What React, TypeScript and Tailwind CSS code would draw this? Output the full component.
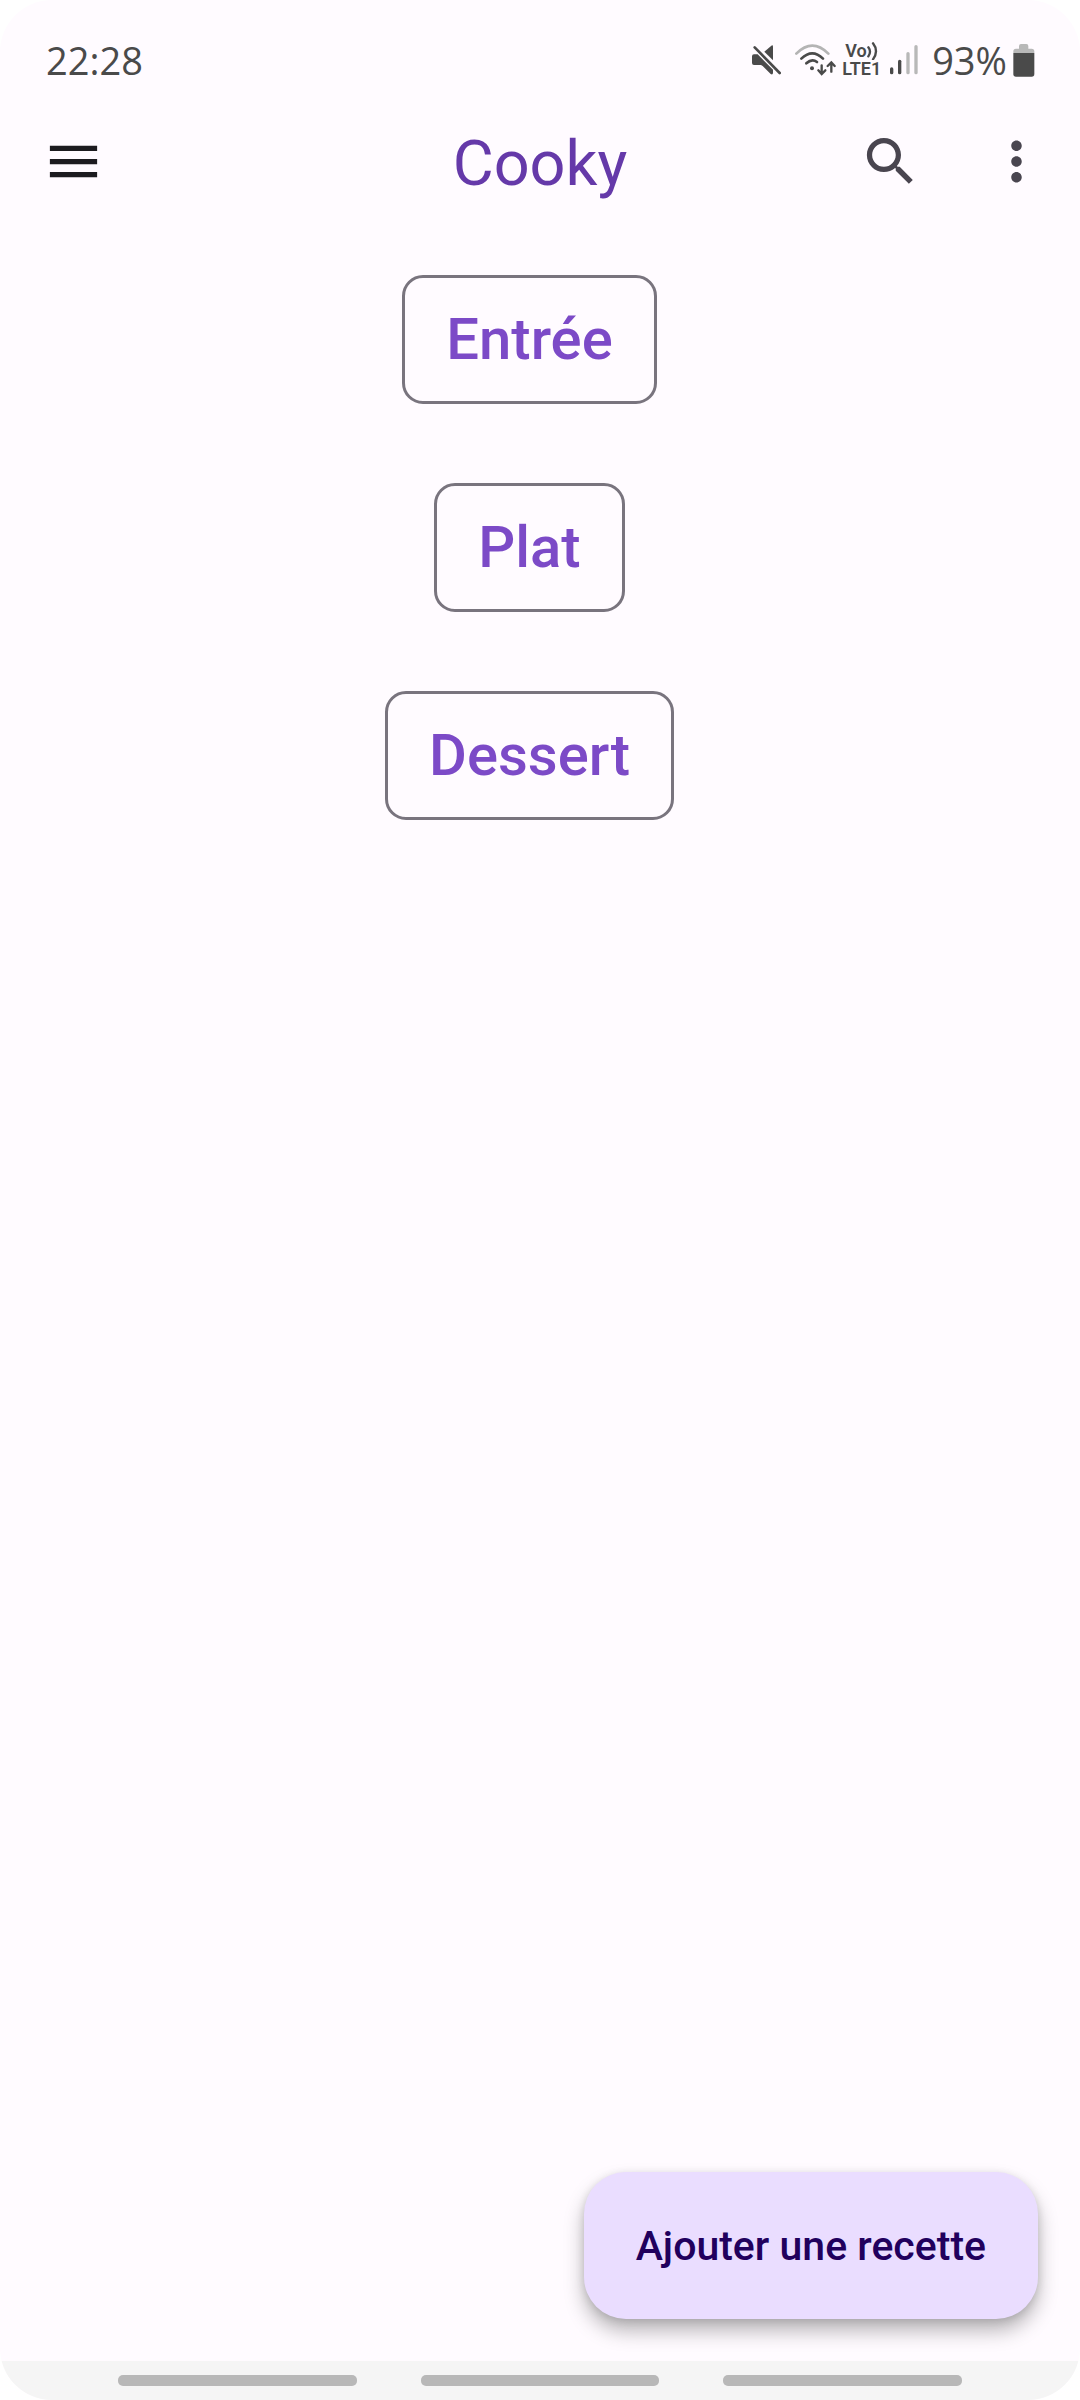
const categories = ["Entrée", "Plat", "Dessert"];

function MutedIcon() {
  return (
    <svg viewBox="0 0 87 90" className="h-[30px] w-[29px]" role="img" aria-label="Son coupé">
      <path d="M37 20 L58 2 Q63 -1 63 5 V46Z" fill="#4a4a4a" />
      <path d="M6 28 H17 L63 74 V84 Q62 91 56 87 L32 63 L27 60 H6 Q0 60 0 54 V34 Q0 28 6 28Z" fill="#4a4a4a" />
      <path d="M8 7 L83 84" stroke="#4a4a4a" strokeWidth="8" strokeLinecap="round" />
    </svg>
  );
}

function WifiIcon() {
  return (
    <svg viewBox="0 0 123 96" className="h-[32px] w-[41px]" fill="none" strokeLinecap="round" role="img" aria-label="Wi-Fi">
      <path d="M4 29 Q52 -19 100 29" stroke="#b4b4b4" strokeWidth="8" />
      <path d="M19 44 Q52 12 84 44" stroke="#4a4a4a" strokeWidth="8" />
      <path d="M34 58 Q51 42 66 54" stroke="#4a4a4a" strokeWidth="8" />
      <circle cx="51" cy="73" r="6" fill="#4a4a4a" />
      <path d="M80 64 V89 M70 79 L80 90 L91 79" stroke="#4a4a4a" strokeWidth="7" />
      <path d="M109 83 V56 M98 66 L109 55 L119 66" stroke="#4a4a4a" strokeWidth="7" />
    </svg>
  );
}

function VolteIcon() {
  return (
    <div className="w-[40px] text-[18px] leading-[18px] font-semibold text-[#4a4a4a]">
      <div className="flex items-center pl-[3px]">
        Vo
        <svg viewBox="0 0 36 54" className="h-[18px] w-[12px]" fill="none" stroke="#4a4a4a" strokeWidth="7" strokeLinecap="round" aria-hidden="true">
          <path d="M4 16 Q14 29 4 43" />
          <path d="M18 4 Q36 27 18 52" />
        </svg>
      </div>
      <div>LTE1</div>
    </div>
  );
}

function SignalIcon() {
  return (
    <svg viewBox="0 0 84 90" className="h-[30px] w-[28px]" strokeWidth="10" strokeLinecap="round" role="img" aria-label="Réseau mobile">
      <path d="M5 72 V83" stroke="#4a4a4a" />
      <path d="M29 49 V83" stroke="#4a4a4a" />
      <path d="M54 26 V83" stroke="#b8b8b8" />
      <path d="M78 5 V83" stroke="#b8b8b8" />
    </svg>
  );
}

function BatteryIcon() {
  return (
    <svg viewBox="0 0 66 99" className="h-[33px] w-[22px]" role="img" aria-label="Batterie">
      <path d="M1 27 V22 Q1 14 9 14 H18 V6 Q18 0 24 0 H40 Q46 0 46 6 V14 H56 Q64 14 64 22 V27Z" fill="#b8b8b8" />
      <path d="M1 27 H64 V90 Q64 98 56 98 H9 Q1 98 1 90Z" fill="#4a4a4a" />
    </svg>
  );
}

function StatusBar() {
  return (
    <div className="flex h-[79px] items-end justify-between pr-[45px] pl-[46px] font-['Open_Sans','Noto_Sans',sans-serif] text-[38px] leading-[38px] text-[#4a4a4a]">
      <time>22:28</time>
      <div className="flex items-center">
        <MutedIcon />
        <div className="ml-[14px]"><WifiIcon /></div>
        <div className="ml-[6px] font-[Roboto,sans-serif]"><VolteIcon /></div>
        <div className="ml-[8px]"><SignalIcon /></div>
        <span className="ml-[14px]">93%</span>
        <div className="ml-[6px]"><BatteryIcon /></div>
      </div>
    </div>
  );
}

function TopBar() {
  return (
    <header className="grid h-[165px] grid-cols-[1fr_auto_1fr] items-center px-8">
      <button type="button" aria-label="Menu" className="ml-[10px] justify-self-start">
        <svg viewBox="0 0 24 24" className="size-[63px]" fill="#1c1b1f">
          <path d="M3 18h18v-2H3v2zm0-5h18v-2H3v2zm0-7v2h18V6H3z" />
        </svg>
      </button>
      <h1 className="pt-1 text-[63px] leading-[74px] text-[#6539a9]">Cooky</h1>
      <div className="flex gap-[63px] justify-self-end">
        <button type="button" aria-label="Rechercher">
          <svg viewBox="0 0 24 24" className="size-[63px]" fill="#49454f">
            <path d="M15.5 14h-.79l-.28-.27C15.41 12.59 16 11.11 16 9.5 16 5.91 13.09 3 9.5 3S3 5.91 3 9.5 5.91 16 9.5 16c1.61 0 3.09-.59 4.23-1.57l.27.28v.79l5 4.99L20.49 19l-4.99-5zm-6 0C7.01 14 5 11.99 5 9.5S7.01 5 9.5 5 14 7.01 14 9.5 11.99 14 9.5 14z" />
          </svg>
        </button>
        <button type="button" aria-label="Plus d'options">
          <svg viewBox="0 0 24 24" className="size-[63px]" fill="#49454f">
            <path d="M12 8c1.1 0 2-.9 2-2s-.9-2-2-2-2 .9-2 2 .9 2 2 2zm0 2c-1.1 0-2 .9-2 2s.9 2 2 2 2-.9 2-2-.9-2-2-2zm0 6c-1.1 0-2 .9-2 2s.9 2 2 2 2-.9 2-2-.9-2-2-2z" />
          </svg>
        </button>
      </div>
    </header>
  );
}

export default function App() {
  return (
    <div className="bg-white font-[Roboto,sans-serif]">
      <div className="flex min-h-screen flex-col overflow-hidden rounded-[52px] bg-[#fffbff]">
        <StatusBar />
        <TopBar />
        <main className="flex flex-1 flex-col items-center gap-[79px] pt-[31px] pr-[21px]">
          {categories.map((name) => (
            <button
              key={name}
              type="button"
              className="rounded-[21px] border-3 border-[#79747e] px-[41px] pt-[26px] pb-[27px] text-[58px] leading-[70px] font-medium text-[#7c4ac7]"
            >
              {name}
            </button>
          ))}
        </main>
        <div className="flex justify-end p-[42px]">
          <button
            type="button"
            className="h-[147px] rounded-[42px] bg-[#eaddff] px-[52px] text-[41px] leading-[54px] font-medium text-[#21005d] shadow-[0_12px_20px_rgba(0,0,0,0.28),0_2px_8px_rgba(0,0,0,0.12)]"
          >
            Ajouter une recette
          </button>
        </div>
        <nav aria-label="Navigation système" className="flex h-[39px] gap-16 bg-[#f5f5f5] px-[118px] pt-[14px]">
          <button type="button" aria-label="Applications récentes" className="h-[11px] flex-1 rounded-[5px] bg-[#b8b8b8]" />
          <button type="button" aria-label="Accueil" className="h-[11px] flex-1 rounded-[5px] bg-[#b8b8b8]" />
          <button type="button" aria-label="Retour" className="h-[11px] flex-1 rounded-[5px] bg-[#b8b8b8]" />
        </nav>
      </div>
    </div>
  );
}
